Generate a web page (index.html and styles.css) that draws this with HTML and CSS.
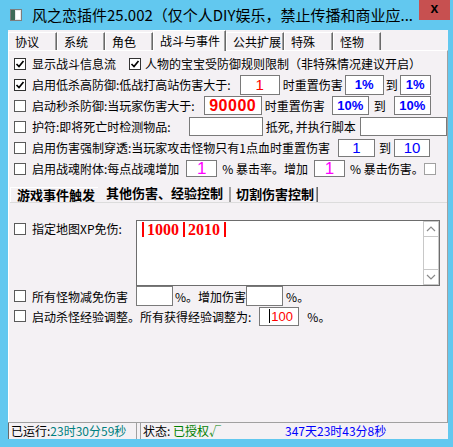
FILE: index.html
```html
<!DOCTYPE html>
<html lang="zh">
<head>
<meta charset="utf-8">
<title>风之恋插件</title>
<link rel="stylesheet" href="styles.css">
</head>
<body>
<div class="win">
  <div class="titlebar">
    <svg class="icon" width="12" height="12" viewBox="0 0 12 12">
      <rect x="0" y="0" width="12" height="12" fill="#7d7d7d"/>
      <rect x="1" y="1" width="10" height="10" fill="#e8e8e8"/>
      <rect x="1" y="1" width="4" height="10" fill="#3f6b58"/>
      <rect x="6" y="2" width="4" height="8" fill="#ffffff"/>
    </svg>
    <div class="title">风之恋插件25.002（仅个人DIY娱乐，禁止传播和商业应...</div>
    <div class="close">x</div>
  </div>
  <div class="client">
    <div class="tabs">
      <div class="tab w49">协议</div>
      <div class="tab w48">系统</div>
      <div class="tab w48">角色</div>
      <div class="tab sel w73">战斗与事件</div>
      <div class="tab w58">公共扩展</div>
      <div class="tab w49">特殊</div>
      <div class="tab w48">怪物</div>
    </div>
    <div class="panel">
      <div class="row">
        <span class="cb on"><svg width="10" height="10" viewBox="0 0 10 10"><polyline points="1.5,5 4,7.5 8.5,2" fill="none" stroke="#000" stroke-width="1.7"/></svg></span>
        <span>显示战斗信息流</span>
        <span class="cb on cb2"><svg width="10" height="10" viewBox="0 0 10 10"><polyline points="1.5,5 4,7.5 8.5,2" fill="none" stroke="#000" stroke-width="1.7"/></svg></span>
        <span>人物的宝宝受防御规则限制（非特殊情况建议开启）</span>
      </div>
      <div class="row">
        <span class="cb on"><svg width="10" height="10" viewBox="0 0 10 10"><polyline points="1.5,5 4,7.5 8.5,2" fill="none" stroke="#000" stroke-width="1.7"/></svg></span>
        <span>启用低杀高防御:低战打高站伤害大于:</span>
        <span class="in r2a red v15">1</span>
        <span class="t3">时重置伤害</span>
        <span class="in r2b blue b13">1%</span>
        <span class="t2">到</span>
        <span class="in r2c blue b13">1%</span>
      </div>
      <div class="row">
        <span class="cb"></span>
        <span>启动秒杀防御:当玩家伤害大于:</span>
        <span class="in r3a red b16">90000</span>
        <span class="t3">时重置伤害</span>
        <span class="in r3b blue b13">10%</span>
        <span class="t5">到</span>
        <span class="in r3c blue b13">10%</span>
      </div>
      <div class="row">
        <span class="cb"></span>
        <span>护符:即将死亡时检测物品:</span>
        <span class="in r4a"></span>
        <span class="t3">抵死, 并执行脚本</span>
        <span class="in r4b"></span>
      </div>
      <div class="row">
        <span class="cb"></span>
        <span>启用伤害强制穿透:当玩家攻击怪物只有1点血时重置伤害</span>
        <span class="in r5a blue v15">1</span>
        <span class="t4">到</span>
        <span class="in r5b blue v15">10</span>
      </div>
      <div class="row">
        <span class="cb"></span>
        <span>启用战魂附体:每点战魂增加</span>
        <span class="in r6a mag v17">1</span>
        <span class="t5">% 暴击率。增加</span>
        <span class="in r6b mag v17">1</span>
        <span class="t5">% 暴击伤害。</span>
        <span class="cb small"></span>
      </div>

      <div class="subtabs">
        <div class="stab s1">游戏事件触发</div>
        <div class="stab s2 sel">其他伤害、经验控制</div>
        <div class="stab s3">切割伤害控制</div>
      </div>

      <div class="xprow">
        <span class="cb top"></span>
        <span class="xplabel">指定地图XP免伤:</span>
        <div class="area">
          <div class="areatext"><i class="bar"></i>1000<i class="bar"></i>2010<i class="bar"></i></div>
          <div class="scroll">
            <div class="sbtn"><svg width="10" height="6" viewBox="0 0 10 6"><polyline points="1,5 5,1 9,5" fill="none" stroke="#8a8a8a" stroke-width="1.2"/></svg></div>
            <div class="strack"></div>
            <div class="sbtn"><svg width="10" height="6" viewBox="0 0 10 6"><polyline points="1,1 5,5 9,1" fill="none" stroke="#8a8a8a" stroke-width="1.2"/></svg></div>
          </div>
        </div>
      </div>
      <div class="row r20">
        <span class="cb"></span>
        <span>所有怪物减免伤害</span>
        <span class="in ra1"></span>
        <span class="t2">%。增加伤害</span>
        <span class="in ra2"></span>
        <span class="t3">%。</span>
      </div>
      <div class="row r20">
        <span class="cb"></span>
        <span>启动杀怪经验调整。所有获得经验调整为:</span>
        <span class="in rb1"><i class="caret"></i><span class="red v13">100</span></span>
        <span class="t8">%。</span>
      </div>
    </div>
    <div class="status">
      <div class="sp sp1">已运行:<span class="teal">23时30分59秒</span></div>
      <div class="sp sp2">状态: <span class="green">已授权√</span></div>
      <div class="sp sp3"><span class="blue">347天23时43分8秒</span></div>
    </div>
  </div>
</div>
</body>
</html>
```

FILE: styles.css
```css
* { box-sizing: border-box; }
body {
  margin: 0;
  background: #62c8ef;
  font-family: "Noto Sans CJK SC", "Liberation Sans", sans-serif;
  font-size: 12px;
  color: #000;
}
.win {
  width: 453px;
  height: 447px;
  background: #62c8ef;
}
.titlebar {
  height: 30px;
  display: flex;
  align-items: flex-start;
}
.icon {
  margin: 9px 0 0 10px;
  flex: none;
}
.title {
  margin-left: 10px;
  margin-top: 4px;
  font-size: 15px;
  line-height: 21px;
  white-space: nowrap;
  flex: none;
}
.close {
  margin-left: auto;
  margin-right: 3px;
  width: 31px;
  height: 20px;
  background: #c75050;
  color: #000;
  font-family: "Liberation Sans", sans-serif;
  font-weight: bold;
  font-size: 14px;
  line-height: 17px;
  text-align: center;
  flex: none;
}
.client {
  margin: 0 5px 0 8px;
  height: 409px;
  background: #f4f1f4;
  display: flex;
  flex-direction: column;
}
.tabs {
  height: 20px;
  display: flex;
  align-items: flex-end;
  flex: none;
}
.tab {
  height: 18px;
  padding-left: 6px;
  line-height: 17px;
  border-top: 1px solid #fff;
  border-left: 1px solid #fff;
  border-right: 1px solid #696969;
  box-shadow: inset -1px 0 #a0a0a0;
  white-space: nowrap;
}
.tab.sel {
  height: 21px;
  margin-bottom: -1px;
  line-height: 19px;
  background: #f7f5f7;
  position: relative;
}
.w49 { width: 49px; }
.w48 { width: 48px; }
.w73 { width: 73px; }
.w58 { width: 58px; }
.panel {
  flex: 1;
  border-top: 1px solid #fff;
  border-left: 1px solid #fff;
  border-right: 1px solid #a0a0a0;
  padding: 2px 0 0 5px;
}
.row {
  display: flex;
  align-items: center;
  height: 21px;
  white-space: nowrap;
}
.row.r20 { height: 20px; }
.cb {
  width: 12px;
  height: 12px;
  border: 1px solid #5a5a5a;
  background: #fff;
  margin-right: 6px;
  flex: none;
  display: flex;
  align-items: center;
  justify-content: center;
}
.cb.on { border-color: #333; }
.cb2 { margin-left: 13px; margin-right: 4px; }
.cb.small { margin-left: 0; width: 12px; height: 12px; border-color: #a0a0a0; }
.cb.top { margin-top: 3px; }
.in {
  height: 20px;
  border: 1px solid #7a7a7a;
  background: #fff;
  display: flex;
  align-items: center;
  justify-content: center;
  flex: none;
  font-family: "Liberation Sans", sans-serif;
}
.red { color: #ff0000; }
.blue { color: #0000ff; }
.mag { color: #ff00ff; }
.teal { color: #008080; }
.green { color: #008000; }
.v13 { font-size: 13px; }
.v15 { font-size: 15px; }
.v17 { font-size: 17px; }
.b13 { font-size: 13px; font-weight: bold; }
.b16 { font-size: 16px; font-weight: bold; letter-spacing: 0.5px; }
.t2 { margin-left: 2px; }
.t3 { margin-left: 3px; }
.t4 { margin-left: 4px; }
.t5 { margin-left: 5px; }
.t8 { margin-left: 8px; }

.r2a { margin-left: 9px; width: 40px; }
.r2b { margin-left: 2px; width: 39px; }
.r2c { margin-left: 2px; width: 31px; }
.r3a { margin-left: 9px; width: 58px; height: 19px; }
.r3b { margin-left: 7px; width: 37px; height: 19px; }
.r3c { margin-left: 8px; width: 37px; height: 19px; }
.r4a { margin-left: 18px; width: 74px; height: 19px; }
.r4b { margin-left: 4px; width: 87px; height: 19px; }
.r5a { margin-left: 8px; width: 37px; height: 18px; }
.r5b { margin-left: 3px; width: 36px; height: 18px; }
.r6a { margin-left: 7px; width: 31px; height: 17px; }
.r6b { margin-left: 6px; width: 31px; height: 17px; }

.subtabs {
  display: flex;
  align-items: flex-end;
  height: 20px;
  margin: 4px 0 0 -4px;
  border-bottom: 1px solid #dcdcdc;
  font-weight: bold;
  font-size: 13px;
}
.stab {
  height: 15px;
  line-height: 14px;
  white-space: nowrap;
}
.stab.sel {
  height: 17px;
  line-height: 15px;
}
.s1 {
  width: 88px;
  padding-left: 6px;
  border-top: 1px solid #fff;
  border-left: 1px solid #fff;
}
.s2 { width: 131px; padding-left: 8px; }
.s3 {
  width: 89px;
  padding-left: 5px;
  border-left: 2px solid #a0a0a0;
  border-right: 1px solid #696969;
  box-shadow: inset -1px 0 #a0a0a0;
}

.xprow {
  display: flex;
  align-items: flex-start;
  margin-top: 17px;
  white-space: nowrap;
}
.xplabel {
  line-height: 18px;
  width: 104px;
  flex: none;
}
.area {
  width: 304px;
  height: 66px;
  border: 1px solid #6d6d6d;
  background: #fff;
  display: flex;
  flex: none;
}
.areatext {
  flex: 1;
  padding: 1px 0 0 5px;
  height: 16px;
  display: flex;
  align-items: center;
  color: #ff0000;
  font-family: "Liberation Serif", serif;
  font-weight: bold;
  font-size: 16px;
  line-height: 16px;
}
.bar {
  display: inline-block;
  width: 2px;
  height: 15px;
  background: #ff0000;
  margin: 0 3px 0 4px;
}
.bar:first-child { margin-left: 0; }
.scroll {
  width: 16px;
  display: flex;
  flex-direction: column;
  flex: none;
}
.sbtn {
  height: 16px;
  border: 1px solid #c8c8c8;
  background: #fff;
  display: flex;
  align-items: center;
  justify-content: center;
}
.strack {
  flex: 1;
  border-left: 1px solid #c8c8c8;
  border-right: 1px solid #c8c8c8;
  background: #fff;
}

.ra1 { margin-left: 8px; width: 37px; }
.ra2 { margin-left: 0; width: 37px; }
.rb1 {
  margin-left: 8px;
  width: 40px;
  height: 19px;
  justify-content: flex-start;
  padding-left: 9px;
}
.caret {
  display: inline-block;
  width: 1px;
  height: 14px;
  background: #000;
  margin-right: 1px;
}

.status {
  height: 17px;
  flex: none;
  display: flex;
  border-top: 1px solid #a0a0a0;
  line-height: 16px;
  white-space: nowrap;
}
.sp1 {
  width: 129px;
  padding-left: 2px;
  border-left: 1px solid #696969;
  border-right: 1px solid #a0a0a0;
}
.sp2 {
  width: 120px;
  margin-left: 3px;
  padding-left: 2px;
  border-left: 1px solid #a0a0a0;
}
.sp3 {
  padding-left: 25px;
}
```
